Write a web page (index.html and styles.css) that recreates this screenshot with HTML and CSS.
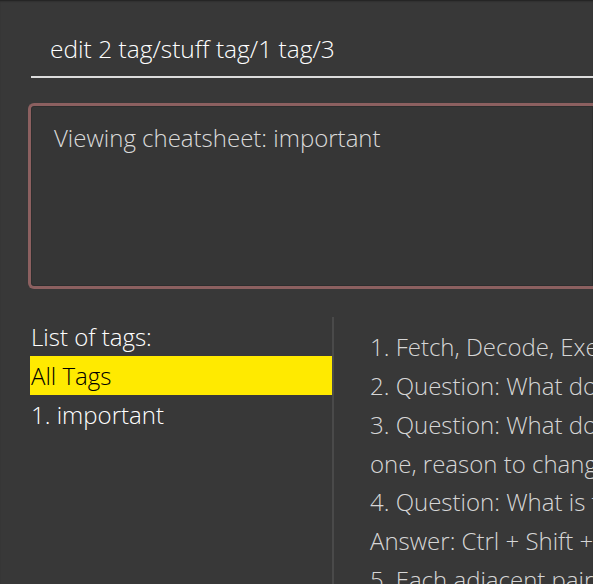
FILE: index.html
```html
<!DOCTYPE html>
<html lang="en">
<head>
<meta charset="utf-8">
<title>Cheatsheet</title>
<link rel="stylesheet" href="styles.css">
</head>
<body>
<div class="app">
  <div class="command-box">
    <div class="command-field">edit 2 tag/stuff tag/1 tag/3</div>
  </div>
  <div class="result-box">
    <div class="result-text">Viewing cheatsheet: important</div>
  </div>
  <div class="main">
    <div class="tag-panel">
      <div class="tag-header">List of tags:</div>
      <div class="tag-item selected">All Tags</div>
      <div class="tag-item">1. important</div>
    </div>
    <div class="divider"></div>
    <div class="content-panel">
      <div class="content-line">1. Fetch, Decode, Execute, Store</div>
      <div class="content-line">2. Question: What does SLAP stand for?</div>
      <div class="content-line">3. Question: What does SRP state? Answer: A class should have only</div>
      <div class="content-line">one, reason to change</div>
      <div class="content-line">4. Question: What is the shortcut to reformat code?</div>
      <div class="content-line">Answer: Ctrl + Shift + Alt + L</div>
      <div class="content-line">5. Each adjacent pair of commits</div>
    </div>
  </div>
</div>
</body>
</html>
```

FILE: styles.css
```css
html, body {
  margin: 0;
  padding: 0;
  height: 100%;
}

body {
  background: #383838;
  font-family: "Open Sans", "Noto Sans", sans-serif;
  font-weight: 300;
  font-size: 24px;
  overflow: hidden;
  box-shadow: inset 0 2px 2px -1px rgba(0, 0, 0, 0.45);
}

.app {
  display: flex;
  flex-direction: column;
  height: 100%;
}

.command-box {
  margin-left: 31px;
  padding: 33px 0 11px 19px;
  border-bottom: 2px solid #dcdcdc;
}

.command-field {
  color: #ffffff;
  font-size: 24.5px;
  line-height: 32px;
  white-space: nowrap;
}

.result-box {
  margin: 25px 0 0 28px;
  height: 186px;
  box-sizing: border-box;
  border: 3px solid #8c6060;
  border-right: none;
  border-radius: 6px 0 0 6px;
  background: #363636;
  box-shadow: inset 0 0 0 1px #2e2e2e;
  padding: 15.5px 0 0 23px;
}

.result-text {
  color: #dadada;
  line-height: 32px;
  white-space: nowrap;
}

.main {
  flex: 1;
  display: flex;
  margin-top: 28px;
  min-height: 0;
}

.tag-panel {
  width: 302px;
  margin-left: 30px;
  color: #ffffff;
}

.tag-header,
.tag-item {
  line-height: 39px;
  height: 39px;
  padding-left: 1px;
  white-space: nowrap;
}

.tag-item.selected {
  background: #ffea00;
  color: #000000;
}

.divider {
  width: 2px;
  background: #4a4a4a;
}

.content-panel {
  flex: 1;
  min-width: 0;
  overflow: hidden;
  padding: 11.3px 0 0 36px;
  color: #d6d6d6;
}

.content-line {
  line-height: 38.8px;
  white-space: nowrap;
}
```
